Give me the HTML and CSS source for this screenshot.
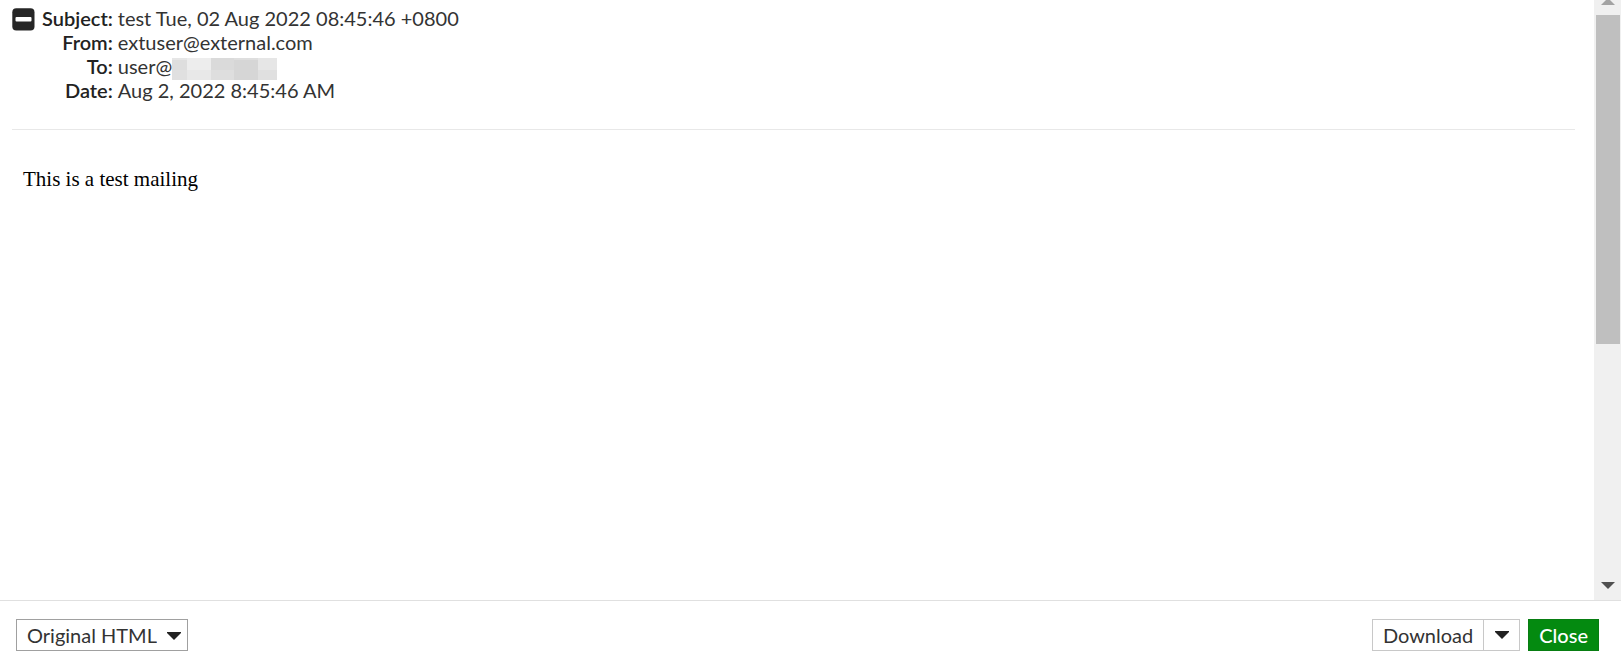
FILE: index.html
```html
<!DOCTYPE html>
<html lang="en">
<head>
<meta charset="utf-8">
<title>Message</title>
<link rel="stylesheet" href="styles.css">
</head>
<body>
<div class="viewer">
  <main class="content">
    <article class="message">
      <header class="headers">
        <button class="toggle" type="button" aria-label="Collapse headers">
          <svg width="23" height="23" viewBox="0 0 23 23"><rect x="0.3" y="0.3" width="22.2" height="22.2" rx="4" fill="#262626"/><rect x="3.5" y="9" width="16" height="4.5" rx="1" fill="#fff"/></svg>
        </button>
        <dl class="fields">
          <dt>Subject:</dt><dd>test Tue, 02 Aug 2022 08:45:46 +0800</dd>
          <dt>From:</dt><dd>extuser@external.com</dd>
          <dt>To:</dt><dd class="recipient">user@<svg class="redacted" width="105" height="22" viewBox="0 0 105 22" aria-hidden="true" shape-rendering="crispEdges"><path fill="#dedede" d="M0 0h105v22H0z"/><path fill="#e6e6e6" d="M0 0h15v2H0z"/><path fill="#ededed" d="M15 0h24v12H15z"/><path fill="#e8e8e8" d="M15 12h24v10H15z"/><path fill="#dadada" d="M39 0h23v12H39z"/><path fill="#d6d6d6" d="M62 2h24v20H62z"/><path fill="#e6e6e6" d="M86 0h19v12H86z"/><path fill="#e0e0e0" d="M0 12h15v10H0zM86 12h19v10H86z"/></svg></dd>
          <dt>Date:</dt><dd>Aug 2, 2022 8:45:46 AM</dd>
        </dl>
      </header>
      <p class="body">This is a test mailing</p>
    </article>
    <div class="scrollbar" aria-hidden="true">
      <svg class="up" width="14" height="7" viewBox="0 0 14 7"><path fill="#a3a3a3" d="M7 0l7 7H0z"/></svg>
      <div class="track"><div class="thumb"></div></div>
      <svg class="down" width="14" height="7" viewBox="0 0 14 7"><path fill="#505050" d="M0 0h14L7 7z"/></svg>
    </div>
  </main>
  <footer class="footer">
    <div class="format">
      <select class="select" aria-label="Message format"><option>Original HTML</option></select>
      <svg class="select-arrow" width="14" height="8" viewBox="0 0 14 8"><path fill="#222" d="M0 0h14v1L7 8 0 1z"/></svg>
    </div>
    <div class="actions">
      <div class="split">
        <button class="button download" type="button">Download</button>
        <button class="button more" type="button" aria-label="More download options"><svg width="14" height="8" viewBox="0 0 14 8"><path fill="#222" d="M0 0h14v1L7 8 0 1z"/></svg></button>
      </div>
      <button class="button close" type="button">Close</button>
    </div>
  </footer>
</div>
</body>
</html>
```
FILE: styles.css
```css
* {
  box-sizing: border-box;
}

body {
  margin: 0;
  background: #fff;
  color: #333;
  font: 20px/24px Lato, sans-serif;
}

button,
select {
  margin: 0;
  color: inherit;
  font: inherit;
}

.viewer {
  display: flex;
  flex-direction: column;
  height: 100vh;
}

.content {
  display: flex;
  flex: 1;
  min-height: 0;
}

.message {
  flex: 1;
  padding: 6px 19px 0 12px;
  overflow: hidden;
}

.headers {
  display: flex;
  align-items: flex-start;
  gap: 7px;
  padding-bottom: 27px;
  border-bottom: 1px solid #e8e8e8;
}

.toggle {
  display: block;
  padding: 2px 0 0;
  border: 0;
  background: none;
}

.toggle svg,
.more svg {
  display: block;
}

.fields {
  display: grid;
  grid-template-columns: auto auto;
  column-gap: 5px;
  margin: 0;
}

.fields dt {
  color: #222;
  font-weight: 600;
  text-align: right;
}

.fields dd {
  margin: 0;
}

.recipient {
  display: flex;
  align-items: flex-end;
}

.redacted {
  margin-bottom: -2px;
}

.body {
  margin: 37px 11px;
  color: #000;
  font: 21px/24px "Liberation Serif", serif;
}

.scrollbar {
  display: flex;
  flex-direction: column;
  align-items: center;
  width: 27px;
  padding-bottom: 11px;
  background: #f0f0f0;
}

.up {
  margin: -2px 0 10px;
}

.track {
  flex: 1;
  align-self: stretch;
  padding: 0 1px 0 2px;
}

.thumb {
  height: 58%;
  background: #bfbfbf;
}

.footer {
  display: flex;
  justify-content: space-between;
  padding: 18px 22px 14px 16px;
  border-top: 1px solid #e0e0e0;
}

.format {
  position: relative;
}

.select {
  display: block;
  height: 32px;
  padding: 0 30px 0 10px;
  border: 1px solid #a0a0a0;
  border-radius: 0;
  background: #fff;
  appearance: none;
}

.select-arrow {
  position: absolute;
  top: 13px;
  right: 7px;
  pointer-events: none;
}

.actions {
  display: flex;
  gap: 8px;
}

.split {
  display: flex;
}

.button {
  height: 32px;
  padding: 0 10px;
  border: 1px solid #c8c8c8;
  background: #fff;
}

.more {
  padding: 0 10px 0 11px;
  border-left: 0;
}

.close {
  border-color: #087d12;
  background: #048a10;
  color: #fff;
  font-weight: 500;
}
```
